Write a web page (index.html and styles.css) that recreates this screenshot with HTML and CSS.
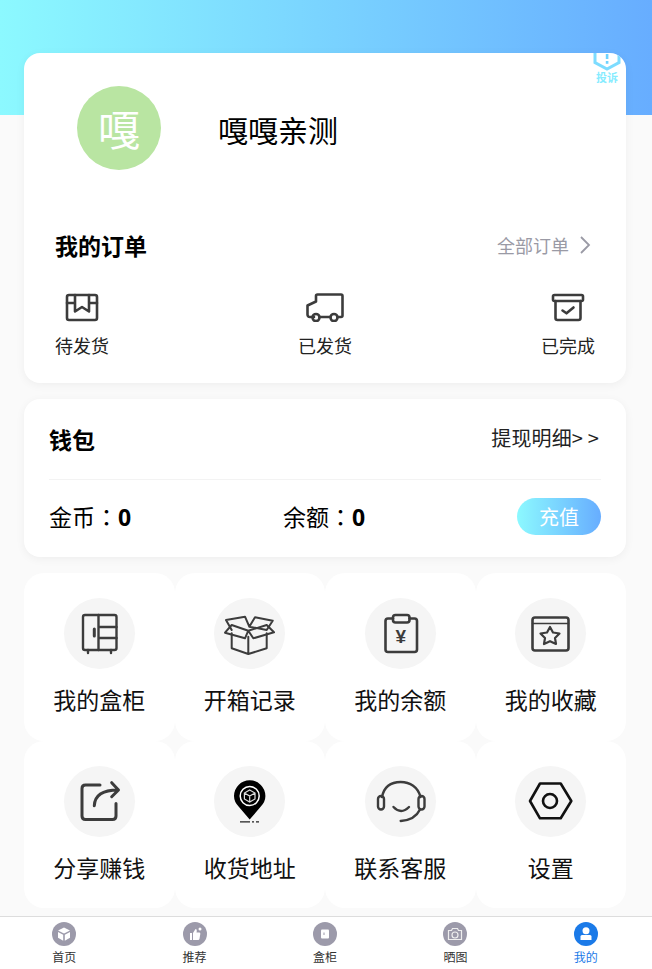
FILE: index.html
```html
<!DOCTYPE html>
<html lang="zh">
<head>
<meta charset="utf-8">
<title>我的</title>
<link rel="stylesheet" href="styles.css">
</head>
<body>
<div class="page">
  <div class="banner"></div>
  <main class="content">
    <section class="card profile">
      <div class="complain">
        <svg class="complain-icon" width="28" height="18" viewBox="0 0 28 18"><path class="complain-shape" d="M2 -4V9.500L14 16L26 9.500V-4"/><rect class="complain-mark" x="12.800" y="1" width="2.600" height="5"/><rect class="complain-mark" x="12.800" y="8" width="2.600" height="2.800"/></svg>
        <span class="complain-text">投诉</span>
      </div>
      <div class="user">
        <div class="avatar">嘎</div>
        <div class="nickname">嘎嘎亲测</div>
      </div>
      <div class="orders-head">
        <div class="orders-title">我的订单</div>
        <div class="orders-all">全部订单
          <svg width="12" height="18" viewBox="0 0 12 18"><path class="chevron" d="M2 1L10 9L2 17"/></svg>
        </div>
      </div>
      <div class="orders">
        <div class="order">
          <svg width="34" height="28" viewBox="0 0 34 28"><g class="line"><rect x="2" y="1.500" width="30" height="25" rx="2"/><path d="M10 1.500V18L17 13.500L24 18V1.500M2 9.500H10M24 9.500H32"/></g></svg>
          <span>待发货</span>
        </div>
        <div class="order">
          <svg width="38" height="29" viewBox="0 0 38 29"><g class="line"><path d="M8 24H4Q1.500 24 1.500 21.500V12.500L10 8.500V3Q10 1.500 11.500 1.500H35Q36.500 1.500 36.500 3V22.500Q36.500 24 35 24H31.500"/><path d="M13.500 24H24.500"/><circle cx="10" cy="24.500" r="3.500"/><circle cx="28" cy="24.500" r="3.500"/></g></svg>
          <span>已发货</span>
        </div>
        <div class="order">
          <svg width="34" height="28" viewBox="0 0 34 28"><g class="line"><rect x="2" y="1.500" width="30" height="6" rx="1.500"/><path d="M4.500 7.500V24.500Q4.500 26.500 6.500 26.500H27.500Q29.500 26.500 29.500 24.500V7.500"/><path d="M11.500 17L15.500 19.800L22.500 14"/></g></svg>
          <span>已完成</span>
        </div>
      </div>
    </section>

    <section class="card wallet">
      <div class="wallet-head">
        <div class="wallet-title">钱包</div>
        <div class="wallet-link">提现明细&gt; &gt;</div>
      </div>
      <div class="wallet-body">
        <div class="balance">金币<span class="colon" lang="zh-Hant">：</span><b>0</b></div>
        <div class="balance">余额<span class="colon" lang="zh-Hant">：</span><b>0</b></div>
        <div class="recharge">充值</div>
      </div>
    </section>

    <section class="menu">
      <div class="cell">
        <div class="disc"><svg width="71" height="71" viewBox="0 0 71 71"><g class="line thin"><rect x="19" y="17" width="33.500" height="35" rx="2"/><path d="M34.500 17V52M34.500 29H52.500M34.500 40H52.500M24 52V55M47 52V55"/><path class="heavy" d="M30.300 31V38"/></g></svg></div>
        <span>我的盒柜</span>
      </div>
      <div class="cell">
        <div class="disc"><svg width="71" height="71" viewBox="0 0 71 71"><g class="line slim"><path d="M17.700 35.300V50.300L34.300 56L52.700 50.300V35.300M34.300 38.700V56"/><path d="M17.700 32L12 22L31 18.700L35.300 28.700L52.700 32L58.700 22.700L41 19.300L35.300 28.700"/><path d="M17.700 27L34.300 32.700L31 40.300L11 34.700ZM52.700 27L34.300 32.700L39.300 40.300L60 34.300Z"/></g></svg></div>
        <span>开箱记录</span>
      </div>
      <div class="cell">
        <div class="disc"><svg width="71" height="71" viewBox="0 0 71 71"><g class="line"><path d="M28 20.500H23Q20.500 20.500 20.500 23V51.500Q20.500 54 23 54H49.500Q52 54 52 51.500V23Q52 20.500 49.500 20.500H44.500"/><rect x="28" y="17" width="16.500" height="7.500" rx="2.500"/></g><text class="yen" x="35.800" y="45">¥</text></svg></div>
        <span>我的余额</span>
      </div>
      <div class="cell">
        <div class="disc"><svg width="71" height="71" viewBox="0 0 71 71"><g class="line"><rect x="17.500" y="19.500" width="36" height="33" rx="2.500"/><path class="hair" d="M17.500 25.500H53.500"/><path class="star" d="M35 29L38 34.500L44.500 35.500L40 40L41 46L35 43.200L29 46L30 40L25.500 35.500L32 34.500Z"/></g></svg></div>
        <span>我的收藏</span>
      </div>
      <div class="cell">
        <div class="disc"><svg width="71" height="71" viewBox="0 0 71 71"><g class="line wide"><path d="M36 19H21.500Q18 19 18 22.500V50Q18 53.500 21.500 53.500H48.500Q52 53.500 52 50V37.500"/><path d="M30.300 39.700Q31 24 54 24M47.700 16.700L54.500 24L47.700 30.700"/></g></svg></div>
        <span>分享赚钱</span>
      </div>
      <div class="cell">
        <div class="disc"><svg width="71" height="71" viewBox="0 0 71 71"><path class="pin" d="M35.700 53.500L25 41Q20 36 20 30A15.700 15.700 0 0 1 51.400 30Q51.400 36 46.400 41Z"/><circle class="pin-ring" cx="35.700" cy="30" r="9.500"/><path class="pin-cube" d="M35.700 24L41 27V33L35.700 36L30.400 33V27ZM30.400 27L35.700 30L41 27M35.700 30V36"/><path class="pin-ground" d="M26 55.800H36M38 55.800H40M42 55.800H45"/></svg></div>
        <span>收货地址</span>
      </div>
      <div class="cell">
        <div class="disc"><svg width="71" height="71" viewBox="0 0 71 71"><g class="line thin"><path d="M17 31C19 21 26 16 35.700 16C45 16 53 21 55.500 31"/><rect x="13" y="30" width="6" height="13.500" rx="3"/><rect x="53.500" y="30" width="6" height="13.500" rx="3"/><path d="M28.500 41Q36 49 44 41"/><path d="M55 43.500Q50 54 35.700 55"/></g></svg></div>
        <span>联系客服</span>
      </div>
      <div class="cell">
        <div class="disc"><svg width="71" height="71" viewBox="0 0 71 71"><g class="line black"><path d="M15 35L25 17.500H45.700L56.300 35L45.700 52.300H25Z"/><circle cx="35" cy="35" r="7"/></g></svg></div>
        <span>设置</span>
      </div>
    </section>
  </main>

  <nav class="tabbar">
    <div class="tab">
      <svg width="24" height="24" viewBox="0 0 24 24"><circle class="tab-disc" cx="12" cy="12" r="12"/><path class="tab-fill" d="M12 5.500L18 8.500L12 11.500L6 8.500ZM6 10L11.200 12.700V18.700L6 15.700ZM18 10L12.800 12.700V18.700L18 15.700Z"/></svg>
      <span>首页</span>
    </div>
    <div class="tab">
      <svg width="24" height="24" viewBox="0 0 24 24"><circle class="tab-disc" cx="12" cy="12" r="12"/><path class="tab-fill" d="M7 11H9V18H7ZM10 11L12.500 7Q14 7 13.800 9L13.500 10.500H16.500Q17.500 10.500 17.300 12L16.500 16.800Q16.300 18 15 18H10Z"/><circle class="tab-fill" cx="17" cy="7" r="1.500"/></svg>
      <span>推荐</span>
    </div>
    <div class="tab">
      <svg width="24" height="24" viewBox="0 0 24 24"><circle class="tab-disc" cx="12" cy="12" r="12"/><rect class="tab-fill" x="8" y="7.500" width="8" height="9" rx="1"/><rect class="tab-disc" x="10.500" y="10.500" width="1" height="2.500"/></svg>
      <span>盒柜</span>
    </div>
    <div class="tab">
      <svg width="24" height="24" viewBox="0 0 24 24"><circle class="tab-disc" cx="12" cy="12" r="12"/><g class="tab-line"><path d="M5.500 8.500H8.500L9.500 6.500H14.500L15.500 8.500H18.500V17.500H5.500Z"/><circle cx="12" cy="13" r="3"/></g></svg>
      <span>晒图</span>
    </div>
    <div class="tab active">
      <svg width="24" height="24" viewBox="0 0 24 24"><circle class="tab-disc" cx="12" cy="12" r="12"/><circle class="tab-fill" cx="12" cy="8.800" r="3.500"/><path class="tab-fill" d="M6.500 14.500Q6.500 13 8 13H16Q17.500 13 17.500 14.500V18H6.500Z"/></svg>
      <span>我的</span>
    </div>
  </nav>
</div>
</body>
</html>
```

FILE: styles.css
```css
* {
  box-sizing: border-box;
}

html,
body {
  margin: 0;
  padding: 0;
}

body {
  background: #fafafa;
  color: #000;
  font-family: "Noto Sans CJK SC", "Liberation Sans", sans-serif;
}

.page {
  display: flex;
  flex-direction: column;
  height: 969px;
  overflow: hidden;
}

.banner {
  flex: none;
  height: 115px;
  background: linear-gradient(90deg, #8cf9ff, #67adff);
}

.content {
  flex: 1;
  display: flex;
  flex-direction: column;
  gap: 16px;
  margin-top: -62px;
  padding: 0 26px 0 24px;
}

.card {
  background: #fff;
  border-radius: 16px;
  box-shadow: 0 2px 10px rgba(0, 0, 0, 0.05);
}

.profile {
  position: relative;
  height: 330px;
  padding: 33px 31px 0;
  overflow: hidden;
}

.complain {
  position: absolute;
  top: 0;
  right: 5px;
  width: 28px;
  display: flex;
  flex-direction: column;
  align-items: center;
}

.complain-icon {
  display: block;
}

.complain-shape {
  fill: none;
  stroke: #7ddcff;
  stroke-width: 3;
}

.complain-mark {
  fill: #6fd3ff;
}

.complain-text {
  color: #86ecff;
  font-size: 11px;
  font-weight: 700;
  line-height: 13px;
}

.user {
  display: flex;
  align-items: center;
  gap: 57px;
  padding-left: 22px;
  height: 84px;
}

.avatar {
  width: 84px;
  height: 84px;
  border-radius: 50%;
  background: #b9e5a2;
  color: #fff;
  font-size: 42px;
  line-height: 84px;
  text-align: center;
}

.nickname {
  font-size: 30px;
  line-height: 40px;
  margin-top: 1px;
}

.orders-head {
  display: flex;
  align-items: center;
  justify-content: space-between;
  margin-top: 59px;
  height: 32px;
}

.orders-title {
  font-size: 23px;
  font-weight: 700;
}

.orders-all {
  display: flex;
  align-items: center;
  gap: 10px;
  margin-top: -1px;
  margin-right: 4px;
  color: #9a9aa5;
  font-size: 18px;
}

.chevron {
  fill: none;
  stroke: #9a9aa5;
  stroke-width: 1.800;
}

.orders {
  display: flex;
  justify-content: space-between;
  margin-top: 32px;
}

.order {
  display: flex;
  flex-direction: column;
  align-items: center;
  width: 54px;
  height: 66px;
  font-size: 18px;
  color: #222;
}

.order svg {
  flex: none;
  display: block;
  height: 29px;
  margin-bottom: 10px;
}

.order span {
  line-height: 26px;
}

.line {
  fill: none;
  stroke: #3c3c3c;
  stroke-width: 2.600;
  stroke-linecap: round;
  stroke-linejoin: round;
}

.line.thin {
  stroke-width: 2.400;
}

.line.slim {
  stroke-width: 2;
}

.line.wide {
  stroke-width: 3;
}

.line.black {
  stroke: #111;
  stroke-width: 2.600;
}

.heavy {
  stroke-width: 3;
}

.hair {
  stroke-width: 1.500;
}

.star {
  stroke-width: 2.200;
}

.yen {
  fill: #3c3c3c;
  font-family: "Liberation Sans", sans-serif;
  font-size: 19px;
  font-weight: 700;
  text-anchor: middle;
}

.wallet {
  height: 158px;
  padding: 0 25px;
}

.wallet-head {
  display: flex;
  align-items: center;
  justify-content: space-between;
  height: 81px;
  border-bottom: 1px solid #f3f3f3;
}

.wallet-title {
  font-size: 23px;
  font-weight: 700;
  margin-top: -1px;
}

.wallet-link {
  margin-top: -4px;
  margin-right: 2px;
  color: #222;
  font-size: 20px;
  letter-spacing: 0.150px;
}

.wallet-body {
  display: flex;
  align-items: center;
  margin-top: 18px;
  height: 37px;
}

.balance {
  width: 234px;
  margin-top: -2px;
  font-size: 23px;
}

.colon {
  font-family: "Noto Sans CJK TC", sans-serif;
}

.balance b {
  font-family: "Open Sans", "Liberation Sans", sans-serif;
}

.recharge {
  width: 84px;
  height: 37px;
  margin-left: auto;
  border-radius: 19px;
  background: linear-gradient(90deg, #8cf9ff, #67adff);
  color: #fff;
  font-size: 20px;
  line-height: 37px;
  text-align: center;
}

.menu {
  display: grid;
  grid-template-columns: repeat(4, 1fr);
  grid-auto-rows: 167.500px;
}

.cell {
  display: flex;
  flex-direction: column;
  align-items: center;
  padding-top: 25px;
  background: #fff;
  border-radius: 20px;
  font-size: 23px;
  color: #111;
}

.disc {
  width: 71px;
  height: 71px;
  margin-bottom: 13px;
  border-radius: 50%;
  background: #f5f5f5;
}

.disc svg {
  display: block;
}

.cell span {
  line-height: 34px;
}

.pin {
  fill: #000;
}

.pin-ring {
  fill: none;
  stroke: #fff;
  stroke-width: 1.500;
}

.pin-cube {
  fill: none;
  stroke: #ddd;
  stroke-width: 1.200;
}

.pin-ground {
  fill: none;
  stroke: #222;
  stroke-width: 1.300;
}

.tabbar {
  flex: none;
  display: grid;
  grid-template-columns: repeat(5, 1fr);
  height: 53px;
  border-top: 1px solid #ddd;
  background: #fff;
}

.tab {
  display: flex;
  flex-direction: column;
  align-items: center;
  margin-right: 2px;
  padding-top: 5px;
  font-size: 12px;
  line-height: 16px;
  color: #333;
}

.tab svg {
  display: block;
  margin-bottom: 3px;
}

.tab-disc {
  fill: #9c9aaa;
}

.tab-fill {
  fill: #fff;
}

.tab-line {
  fill: none;
  stroke: #eee;
  stroke-width: 1.200;
}

.active {
  color: #1b7ae8;
}

.active .tab-disc {
  fill: #1b7ae8;
}
```
